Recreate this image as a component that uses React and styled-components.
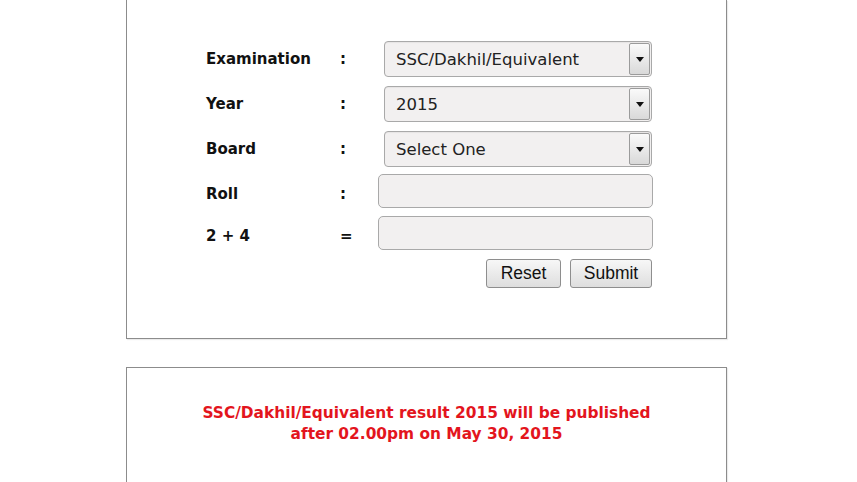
import React from 'react'
import styled, { createGlobalStyle } from 'styled-components'

const GlobalStyle = createGlobalStyle`
  body {
    margin: 0;
    background: #fff;
    font-family: "DejaVu Sans", Verdana, sans-serif;
  }
`;

const Page = styled.div`
  width: 601px;
  margin-left: 126px;
`;

const Panel = styled.div`
  border: 1px solid #8c8c8c;
  ${({open}) => open ? `border-top: 0;` : ``}
  background: #fff;
  box-shadow: 1px 1px 1px rgba(0,0,0,0.08);
  padding: ${({pad}) => pad};
  margin-bottom: 28px;
`;

const Form = styled.div`
  display: grid;
  grid-template-columns: 134px 38px 275px;
  margin-left: 79px;
`;

const Label = styled.div`
  font-weight: bold;
  font-size: 15px;
  color: #111;
  height: ${({h}) => h}px;
  padding-top: ${({top}) => top}px;
  box-sizing: border-box;
`;

const Cell = styled.div`
  height: ${({h}) => h}px;
`;

const SelectBox = styled.div`
  display: flex;
  align-items: stretch;
  margin-left: 6px;
  width: 268px;
  height: 36px;
  box-sizing: border-box;
  border: 1px solid #a9a9a9;
  border-radius: 4px;
  background: #f2f0f0;
  box-shadow: inset 0 1px 1px rgba(0,0,0,0.05);
`;

const SelectValue = styled.span`
  flex: 1;
  display: flex;
  align-items: center;
  padding-left: 11px;
  font-size: 16.5px;
  color: #222;
`;

const ArrowBox = styled.span`
  width: 19px;
  margin: 1px 1px 1px 0;
  border: 1px solid #9b9b9b;
  border-radius: 2px;
  background: linear-gradient(#fafafa, #d9d9d9);
  display: flex;
  align-items: center;
  justify-content: center;
`;

const TextBox = styled.input`
  display: block;
  width: 275px;
  height: 34px;
  box-sizing: border-box;
  border: 1px solid #a9a9a9;
  border-radius: 5px;
  background: #f2f0f0;
  outline: none;
`;

const Actions = styled.div`
  grid-column: 1 / 4;
  display: flex;
  justify-content: flex-end;
  gap: 9px;
  padding-right: 1px;
`;

const Button = styled.button`
  height: 29px;
  padding: 0 10px;
  font-family: "Liberation Sans", Arial, sans-serif;
  font-size: 17.5px;
  color: #111;
  border: 1px solid #8e8e8e;
  border-radius: 3px;
  background: linear-gradient(#f7f7f7, #dedede);
  width: ${({w}) => w}px;
`;

const Notice = styled.p`
  margin: 0;
  text-align: center;
  color: #e3151d;
  font-weight: bold;
  font-size: 15.4px;
  line-height: 21px;
`;

function Select({value}) {
  return (
    <SelectBox>
      <SelectValue>{value}</SelectValue>
      <ArrowBox>
        <svg width="8" height="5" viewBox="0 0 8 5"><path d="M0 0h8L4 5z" fill="#111" /></svg>
      </ArrowBox>
    </SelectBox>
  )
}

const rows = [
  {label: 'Examination', sep: ':', select: 'SSC/Dakhil/Equivalent', h: 45},
  {label: 'Year', sep: ':', select: '2015', h: 45},
  {label: 'Board', sep: ':', select: 'Select One', h: 43},
  {label: 'Roll', sep: ':', h: 42},
  {label: '2 + 4', sep: '=', h: 43},
];

export default function App() {
  return (
    <>
      <GlobalStyle />
      <Page>
        <Panel open pad="41px 0 50px">
          <Form>
            {rows.map(row => {
              const top = row.select ? 9 : 11;
              return (
                <React.Fragment key={row.label}>
                  <Label h={row.h} top={top}>{row.label}</Label>
                  <Label h={row.h} top={top}>{row.sep}</Label>
                  <Cell h={row.h}>
                    {row.select ? <Select value={row.select} /> : <TextBox type="text" />}
                  </Cell>
                </React.Fragment>
              )
            })}
            <Actions>
              <Button type="reset" w={75}>Reset</Button>
              <Button type="submit" w={82}>Submit</Button>
            </Actions>
          </Form>
        </Panel>
        <Panel pad="35px 0 60px">
          <Notice>
            SSC/Dakhil/Equivalent result 2015 will be published<br />
            after 02.00pm on May 30, 2015
          </Notice>
        </Panel>
      </Page>
    </>
  )
}
